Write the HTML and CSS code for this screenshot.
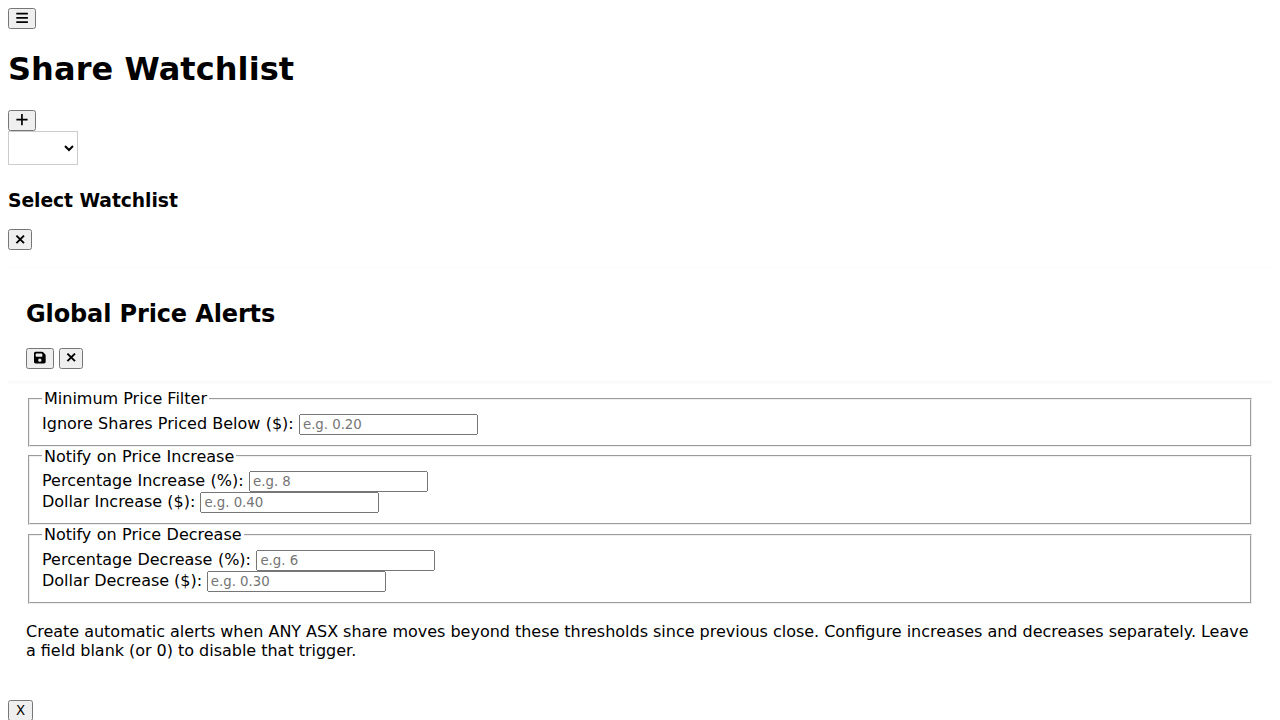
FILE: index.html
```html
<!DOCTYPE html>
<html lang="en">
<head>
<meta charset="utf-8">
<title>Share Watchlist</title>
<link rel="stylesheet" href="styles.css">
</head>
<body>
<header>
<button class="icon-btn" aria-label="Menu"><svg class="icon wide" viewBox="0 0 11.67 13.33"><path d="M.3 1.8h11.6v1.8H.3zM.3 6h11.6v1.8H.3zM.3 10.2h11.6V12H.3z"/></svg></button>
<h1>Share Watchlist</h1>
<button class="icon-btn" aria-label="Add"><svg class="icon wide" viewBox="0 0 11.67 13.33"><path d="M5.1 1.1h1.7v4.7h4.8v1.7H6.8v4.7H5.1V7.5H.4V5.8h4.7z"/></svg></button>
</header>
<div class="picker"><select class="watchlist-select" aria-label="Watchlist"></select></div>
<h3>Select Watchlist</h3>
<button class="icon-btn" aria-label="Close"><svg class="icon" viewBox="0 0 8.33 13.33"><path class="cross" d="M.4 2.6l7.6 7.6M8 2.6L.4 10.2"/></svg></button>
<section class="alerts">
<div class="alerts-header">
<h2>Global Price Alerts</h2>
<button class="icon-btn" aria-label="Save"><svg class="icon wide" viewBox="0 0 448 512"><path d="M64 32C29 32 0 61 0 96v320c0 35 29 64 64 64h320c35 0 64-29 64-64V173c0-17-7-33-19-45l-77-77c-12-12-28-19-45-19H64zm0 96c0-18 14-32 32-32h192c18 0 32 14 32 32v64c0 18-14 32-32 32H96c-18 0-32-14-32-32v-64zm160 160a64 64 0 1 1 0 128 64 64 0 1 1 0-128z"/></svg></button>
<button class="icon-btn" aria-label="Close"><svg class="icon" viewBox="0 0 8.33 13.33"><path class="cross" d="M.4 2.6l7.6 7.6M8 2.6L.4 10.2"/></svg></button>
</div>
<div class="alerts-body">
<fieldset><legend>Minimum Price Filter</legend>
<div class="loose"><label for="min">Ignore Shares Priced Below ($):</label> <input id="min" placeholder="e.g. 0.20"></div></fieldset>
<fieldset><legend class="looser">Notify on Price Increase</legend>
<div class="looser"><label for="pi">Percentage Increase (%):</label> <input id="pi" placeholder="e.g. 8"></div>
<div><label for="di">Dollar Increase ($):</label> <input id="di" placeholder="e.g. 0.40"></div></fieldset>
<fieldset><legend class="looser">Notify on Price Decrease</legend>
<div class="looser"><label for="pd">Percentage Decrease (%):</label> <input id="pd" placeholder="e.g. 6"></div>
<div class="tighter"><label for="dd">Dollar Decrease ($):</label> <input id="dd" placeholder="e.g. 0.30"></div></fieldset>
<p>Create automatic alerts when ANY ASX share moves beyond these thresholds since previous close. Configure increases and decreases separately. Leave a field blank (or 0) to disable that trigger.</p>
</div>
</section>
<button class="x-btn">X</button>
</body>
</html>
```
FILE: styles.css
```css
html { overflow: hidden; }
body { font-family: "DejaVu Sans", sans-serif; }
button, input { font-family: "DejaVu Sans", sans-serif; }
input { letter-spacing: -.03px; }
h1 { letter-spacing: .07px; }
h2 { letter-spacing: -.13px; }
h3 { letter-spacing: -.05px; }
.icon-btn { font-size: 13.333px; }
.icon { height: 1em; width: .625em; vertical-align: -.125em; display: inline-block; overflow: visible; }
.icon.wide { width: .875em; }
.cross { fill: none; stroke: #000; stroke-width: 1.9; }
.watchlist-select { width: 70px; height: 34px; border: 1px solid #ccc; background: #fff; font-size: 16px; display: block; }
.picker { padding-bottom: 6px; }
.alerts { margin-top: 18px; }
.alerts-header { padding: 12px 18px; box-shadow: 0 1px 4px rgba(0,0,0,.05); clip-path: inset(-8px 0); }
.alerts-body { padding: 8px 18px 24px; }
.alerts-body p { margin-top: 18px; word-spacing: -.12px; }
.loose { word-spacing: .15px; }
.looser { word-spacing: .35px; }
.tighter { word-spacing: -.3px; }
```
